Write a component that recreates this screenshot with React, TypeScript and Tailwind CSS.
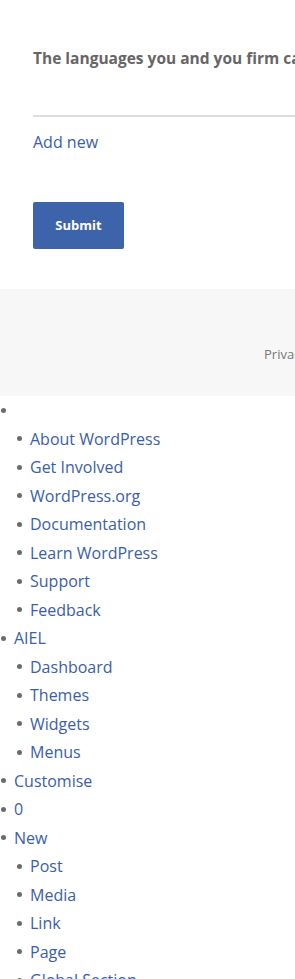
const linkClass = 'text-[#3b5ea8]';

type Item = { label: string; children?: string[] };

const menu: Item[] = [
  {
    label: '',
    children: [
      'About WordPress',
      'Get Involved',
      'WordPress.org',
      'Documentation',
      'Learn WordPress',
      'Support',
      'Feedback',
    ],
  },
  { label: 'AIEL', children: ['Dashboard', 'Themes', 'Widgets', 'Menus'] },
  { label: 'Customise' },
  { label: '0' },
  { label: 'New', children: ['Post', 'Media', 'Link', 'Page', 'Global Section'] },
];

const Row = ({ label, nested }: { label: string; nested?: boolean }) => (
  <li className={`flex items-center h-[28.5px] ${nested ? 'pl-[17px]' : 'pl-[1px]'}`}>
    <span className="w-[5px] h-[5px] rounded-full bg-[#6b6b6b] shrink-0" />
    <a href="#" className={`${linkClass} ml-[8px] whitespace-nowrap`}>
      {label}
    </a>
  </li>
);

export default function App() {
  return (
    <div
      className="w-[295px] overflow-hidden bg-white"
      style={{ fontFamily: '"Open Sans", "Noto Sans", sans-serif' }}
    >
      <form className="pl-[33px] pt-[47px] pb-[40px]">
        <p className="text-[15.5px] font-bold text-[#666] whitespace-nowrap leading-[22px]">
          The languages you and you firm can work in
        </p>
        <div className="mt-[46px] h-[2px] bg-[#dddddd] w-[400px]" />
        <a href="#" className={`${linkClass} block mt-[14px] text-[16px] leading-[22px]`}>
          Add new
        </a>
        <button
          type="button"
          className="mt-[49px] w-[91px] h-[47px] rounded-[2px] bg-[#3d64ab] text-white text-[13px] font-bold"
        >
          Submit
        </button>
      </form>

      <footer className="bg-[#f7f7f7] h-[107px] flex items-start pt-[56px] pl-[264px]">
        <span className="text-[13px] text-[#777] whitespace-nowrap">Privacy Policy</span>
      </footer>

      <ul className="text-[16px]">
        {menu.map((item, i) => (
          <div key={i}>
            <Row label={item.label} />
            {item.children && (
              <ul>
                {item.children.map((c) => (
                  <Row key={c} label={c} nested />
                ))}
              </ul>
            )}
          </div>
        ))}
      </ul>
    </div>
  );
}
